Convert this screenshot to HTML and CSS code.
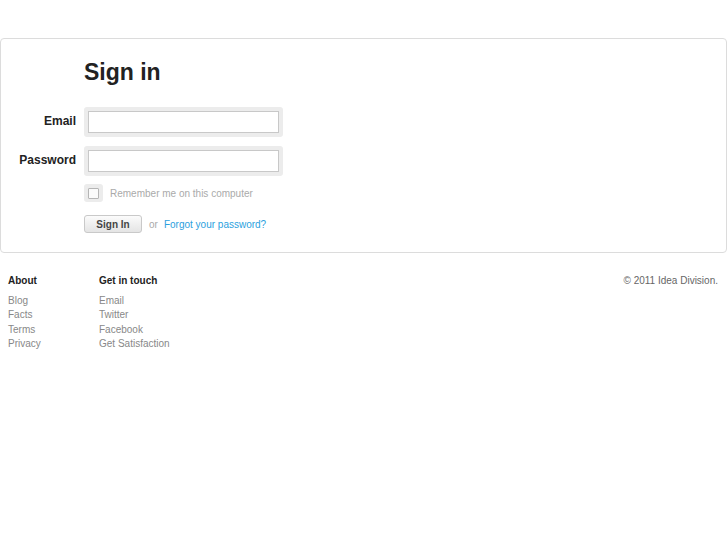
FILE: index.html
```html
<!DOCTYPE html>
<html>
<head>
<meta charset="utf-8">
<title>Sign in</title>
<link rel="stylesheet" href="styles.css">
</head>
<body>
<div class="page">
  <div class="panel">
    <h1 class="title">Sign in</h1>
    <form class="form">
      <label class="label">Email</label>
      <div class="field"><input class="input" type="text"></div>
      <label class="label">Password</label>
      <div class="field"><input class="input" type="password"></div>
      <div></div>
      <div class="remember">
        <span class="check-wrap"><span class="check"></span></span>
        <span class="remember-text">Remember me on this computer</span>
      </div>
      <div></div>
      <div class="actions">
        <button class="btn" type="button">Sign In</button>
        <span class="or">or</span>
        <a class="forgot" href="#">Forgot your password?</a>
      </div>
    </form>
  </div>
  <div class="footer">
    <div class="col">
      <div class="col-head">About</div>
      <a class="flink" href="#">Blog</a>
      <a class="flink" href="#">Facts</a>
      <a class="flink" href="#">Terms</a>
      <a class="flink" href="#">Privacy</a>
    </div>
    <div class="col">
      <div class="col-head">Get in touch</div>
      <a class="flink" href="#">Email</a>
      <a class="flink" href="#">Twitter</a>
      <a class="flink" href="#">Facebook</a>
      <a class="flink" href="#">Get Satisfaction</a>
    </div>
    <div class="copy">© 2011 Idea Division.</div>
  </div>
</div>
</body>
</html>
```
FILE: styles.css
```css
html, body {
  margin: 0;
  padding: 0;
  background: #fff;
}
body {
  font-family: "Liberation Sans", Arial, sans-serif;
  color: #333;
}
.page {
  padding-top: 38px;
}
.panel {
  border: 1px solid #dcdcdc;
  border-radius: 4px;
  padding: 19px 0 19px 0;
}
.title {
  margin: 0 0 21px 83px;
  font-size: 23px;
  line-height: 28px;
  font-weight: bold;
  color: #222;
}
.form {
  display: grid;
  grid-template-columns: 75px auto;
  column-gap: 8px;
  row-gap: 9px;
  align-items: center;
  margin: 0;
}
.label {
  text-align: right;
  font-size: 12px;
  font-weight: bold;
  color: #222;
  line-height: 14px;
  padding-bottom: 3px;
}
.field {
  width: 191px;
  padding: 4px;
  background: #ececec;
  border-radius: 3px;
}
.input {
  display: block;
  box-sizing: border-box;
  width: 191px;
  height: 22px;
  margin: 0;
  border: 1px solid #c8c8c8;
  background: #fff;
  padding: 2px 4px;
  outline: none;
}
.remember {
  display: flex;
  align-items: center;
  gap: 7px;
  margin-top: -1px;
}
.check-wrap {
  display: flex;
  align-items: center;
  justify-content: center;
  width: 19px;
  height: 18px;
  background: #ececec;
  border-radius: 3px;
}
.check {
  display: block;
  box-sizing: border-box;
  width: 11px;
  height: 11px;
  border: 1px solid #b5b5b5;
  background: #fafafa;
  border-radius: 1px;
}
.remember-text {
  font-size: 10px;
  color: #aaa;
}
.actions {
  display: flex;
  align-items: center;
  margin-top: 4px;
}
.btn {
  box-sizing: border-box;
  height: 18px;
  width: 58px;
  padding: 0;
  font-family: "Liberation Sans", Arial, sans-serif;
  font-size: 10px;
  font-weight: bold;
  color: #444;
  border: 1px solid #c9c9c9;
  border-radius: 3px;
  background: linear-gradient(#fbfbfb, #e4e4e4);
}
.or {
  font-size: 10px;
  color: #aaa;
  margin-left: 7px;
}
.forgot {
  font-size: 10px;
  color: #2b9fde;
  text-decoration: none;
  margin-left: 6px;
}
.footer {
  display: flex;
  padding: 21px 9px 0 8px;
}
.col {
  display: flex;
  flex-direction: column;
  width: 91px;
}
.col-head {
  font-size: 10px;
  font-weight: bold;
  color: #222;
  line-height: 14px;
  margin-bottom: 6px;
}
.flink {
  font-size: 10px;
  line-height: 14.3px;
  color: #888;
  text-decoration: none;
}
.copy {
  margin-left: auto;
  font-size: 10px;
  line-height: 14px;
  color: #666;
}
```
